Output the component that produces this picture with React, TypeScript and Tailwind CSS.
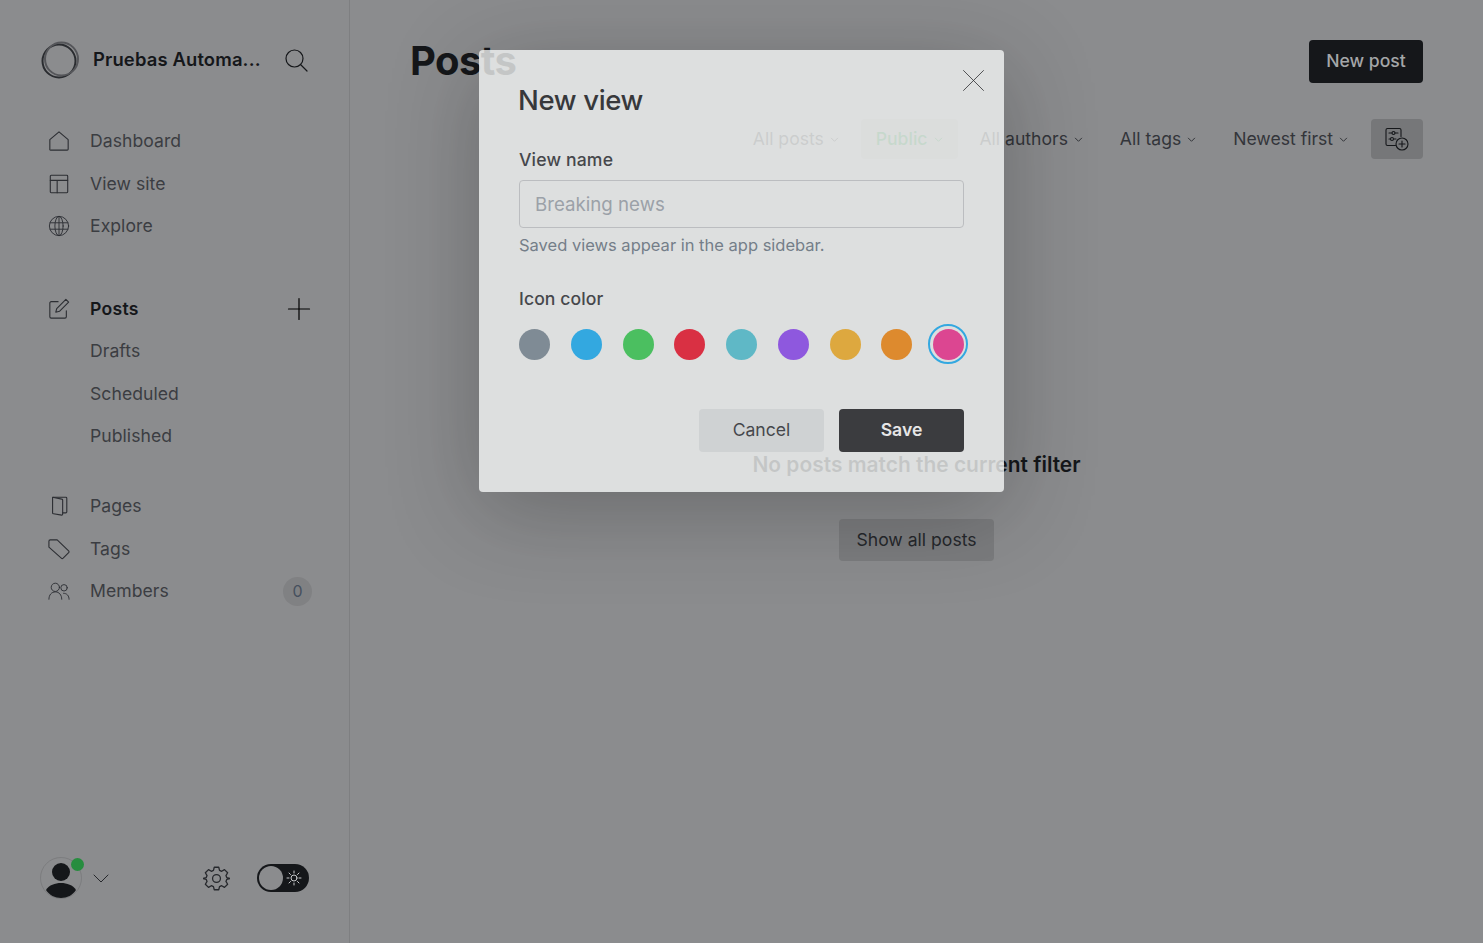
const line = { fill: "none", stroke: "currentColor", strokeWidth: 1.3, strokeLinecap: "round", strokeLinejoin: "round" } as const;

function Icon({ children, size = 22, thin }: { children: React.ReactNode; size?: number; thin?: boolean }) {
  return (
    <svg width={size} height={size} viewBox="0 0 24 24" {...line} strokeWidth={thin ? 1 : 1.2}>
      {children}
    </svg>
  );
}

function Chevron() {
  return (
    <svg width="9" height="9" viewBox="0 0 10 10" {...line} strokeWidth={1.1} className="ml-[6px] mt-[1px]">
      <path d="M1.5 3.5 5 7l3.5-3.5" />
    </svg>
  );
}

function NavItem({ icon, label, right, bold }: { icon?: React.ReactNode; label: string; right?: React.ReactNode; bold?: boolean }) {
  return (
    <div className="flex h-[42.5px] items-center pl-[48px] pr-[37px]">
      <div className="flex w-[22px] justify-center text-[#2c2e33]">{icon}</div>
      <span className={`ml-[20px] text-[17.6px] ${bold ? "font-semibold tracking-[0.3px] text-[#15171a]" : "tracking-[0.05px] text-[#3b3d42]"}`}>{label}</span>
      {right && <div className="ml-auto flex items-center">{right}</div>}
    </div>
  );
}

function Filter({ label, active }: { label: string; active?: boolean }) {
  return (
    <div className={`flex h-[40px] items-center rounded-[4px] px-[15px] text-[17.6px] ${active ? "bg-[#7f8082] font-medium text-[#1d6a34]" : "text-[#33353a]"}`}>
      {label}
      <Chevron />
    </div>
  );
}

const colors = ["bg-[#7c8b97]", "bg-[#1cb0f7]", "bg-[#3acd54]", "bg-[#ee1830]", "bg-[#54c5d6]", "bg-[#904bf4]", "bg-[#f4b02b]", "bg-[#f48a15]"];

function Sidebar() {
  return (
    <aside className="flex h-full w-[350px] shrink-0 flex-col border-r border-[#7e7f81] pt-[41px] pb-[44px]">
      <div className="flex h-[38px] items-center pl-[41px] pr-[41px]">
        <svg width="38" height="38" viewBox="0 0 38 38" fill="none">
          <circle cx="18" cy="20" r="16.5" stroke="#2a2c30" strokeWidth="2" />
          <circle cx="20.5" cy="18" r="16.5" stroke="#55565a" strokeWidth="2" />
        </svg>
        <span className="ml-[14px] text-[18.4px] font-semibold tracking-[0.15px] text-[#15171a]">Pruebas Automa...</span>
        <div className="ml-auto text-[#15171a]">
          <Icon size={24}><circle cx="10.5" cy="10.5" r="8.5" /><path d="M17 17l6 6" /></Icon>
        </div>
      </div>

      <nav className="mt-[41px]">
        <NavItem label="Dashboard" icon={<Icon><path d="M2 21.5V10.5L12 2l10 8.500V21a1 1 0 0 1-1 1H3a1 1 0 0 1-1-.5Z" /></Icon>} />
        <NavItem label="View site" icon={<Icon><rect x="2.500" y="2.500" width="19" height="19" rx="1" /><path d="M2.500 8h19M10 8v13.500" /></Icon>} />
        <NavItem label="Explore" icon={<Icon thin><circle cx="12" cy="12" r="10.500" /><ellipse cx="12" cy="12" rx="4.500" ry="10.500" /><path d="M2.500 8.500h19M2.500 15.500h19M12 1.500v21" /></Icon>} />
      </nav>

      <nav className="mt-[40px]">
        <NavItem
          bold
          label="Posts"
          icon={<Icon><path d="M11 4H3.500A1.500 1.500 0 0 0 2 5.500v15A1.500 1.500 0 0 0 3.500 22h15a1.500 1.500 0 0 0 1.500-1.500V14" /><path d="M19.500 1.500 22.500 4.500 12.500 14.500 8.500 15.500 9.500 11.500Z" /></Icon>}
          right={<div className="mr-[1px]"><Icon size={24}><path d="M12 1.500v21M1.500 12h21" /></Icon></div>}
        />
        <NavItem label="Drafts" />
        <NavItem label="Scheduled" />
        <NavItem label="Published" />
      </nav>

      <nav className="mt-[27.500px]">
        <NavItem label="Pages" icon={<Icon><path d="M5.500 2.500h14a1 1 0 0 1 1 1v15a1 1 0 0 1-1 1h-3.500" /><path d="M5 2.500l10 2a1 1 0 0 1 1 1V21a1 1 0 0 1-1 1l-9-1.500a1 1 0 0 1-1-1Z" /></Icon>} />
        <NavItem label="Tags" icon={<Icon><path d="M1 3.500A1.500 1.500 0 0 1 2.500 2H10l12.500 12a1.500 1.500 0 0 1 0 2l-6 6a1.500 1.500 0 0 1-2 0L1 10Z" /></Icon>} />
        <NavItem
          label="Members"
          icon={<Icon thin><circle cx="8" cy="8" r="4.500" /><path d="M1 21c0-5 3-8 7-8s7 3 7 8" /><circle cx="17.500" cy="8.500" r="3.500" /><path d="M17 14.500c3.500 0 6 2.500 6 6.500" /></Icon>}
          right={<div className="flex size-[29px] items-center justify-center rounded-full bg-[#808183] text-[16px] text-[#46505e]">0</div>}
        />
      </nav>

      <div className="mt-auto flex h-[42px] items-center pl-[40px]">
        <div className="relative size-[42px]">
          <svg width="42" height="42" viewBox="0 0 42 42" fill="none">
            <circle cx="21" cy="21" r="20.500" stroke="#7c7d7f" />
            <circle cx="21" cy="15" r="9" fill="#15171a" />
            <path d="M6 33c3-5 9-7 15-7s12 2 15 7c-3 5-9 8-15 8S9 38 6 33Z" fill="#15171a" />
          </svg>
          <div className="absolute top-[1px] right-[-2px] size-[13px] rounded-full bg-[#278d3f]" />
        </div>
        <div className="ml-[11px] text-[#26282c]">
          <svg width="16" height="16" viewBox="0 0 16 16" {...line} strokeWidth={1}><path d="M1 5l7 7 7-7" /></svg>
        </div>
        <div className="ml-[94px] text-[#26282c]">
          <svg width="27" height="27" viewBox="0 0 24 24" {...line} strokeWidth={1.15}>
            <circle cx="12" cy="12" r="3.500" />
            <path d="M10 2h4l.7 2.800 1.900.8 2.500-1.500 2.800 2.800-1.500 2.500.8 1.900 2.800.7v0l-.1 0-2.700.7-.8 1.900 1.500 2.500-2.800 2.800-2.500-1.500-1.900.8L14 22h-4l-.7-2.800-1.900-.8-2.500 1.500-2.800-2.800 1.500-2.500-.8-1.900L0 12l2.800-.7.8-1.900-1.500-2.500 2.800-2.800 2.500 1.500 1.900-.8Z" />
          </svg>
        </div>
        <div className="ml-[27px] flex h-[28px] w-[52px] items-center rounded-full bg-[#15171a] pl-[2px]">
          <div className="size-[24px] rounded-full bg-[#8b8c8e]" />
          <svg width="16" height="16" viewBox="0 0 16 16" {...line} strokeWidth={1} className="ml-[3px] text-[#c8c9cb]">
            <circle cx="8" cy="8" r="3" />
            <path d="M8 1v2M8 13v2M1 8h2M13 8h2M3 3l1.500 1.500M11.500 11.500 13 13M3 13l1.500-1.500M11.500 4.500 13 3" />
          </svg>
        </div>
      </div>
    </aside>
  );
}

function Main() {
  return (
    <main className="h-full flex-1 px-[60px] pt-[40px]">
      <div className="flex items-start justify-between">
        <h1 className="text-[40px] leading-[42px] font-bold tracking-[-0.6px] text-[#15171a]">Posts</h1>
        <button className="h-[43px] w-[114px] rounded-[4px] bg-[#15171a] text-[17.6px] font-medium text-[#a4a6a8]">New post</button>
      </div>

      <div className="mt-[36px] flex items-center justify-end gap-[6.900px]">
        <Filter label="All posts" />
        <Filter label="Public" active />
        <Filter label="All authors" />
        <Filter label="All tags" />
        <Filter label="Newest first" />
        <div className="ml-[1px] flex h-[40px] w-[52px] items-center justify-center rounded-[4px] bg-[#767779] text-[#15171a]">
          <svg width="26" height="26" viewBox="0 0 26 26" {...line} strokeWidth={1.1}>
            <path d="M11.500 19.500H3.500a1.500 1.500 0 0 1-1.500-1.500V4a1.500 1.500 0 0 1 1.500-1.500h12A1.500 1.500 0 0 1 17 4v6.500" />
            <path d="M5 7h3M11 7h3M5 13h1.500M10 13h2" />
            <circle cx="9.500" cy="7" r="1.500" />
            <circle cx="8" cy="13" r="1.500" />
            <circle cx="18" cy="18" r="6" />
            <path d="M18 15v6M15 18h6" />
          </svg>
        </div>
      </div>

      <div className="mt-[291px] flex flex-col items-center">
        <div className="text-[20.950px] leading-[30px] font-semibold text-[#15171a]">No posts match the current filter</div>
        <button className="mt-[39px] h-[42px] w-[155px] rounded-[4px] bg-[#7b7c7e] text-[17.6px] text-[#26282c]">Show all posts</button>
      </div>
    </main>
  );
}

function Modal() {
  return (
    <div className="absolute top-[50px] left-[479px] h-[442px] w-[525px] rounded-[4px] bg-[#f4f6f5] px-[40px] pt-[32px] opacity-[0.79] shadow-[0_18px_90px_rgba(0,0,0,0.3)]">
      <button className="absolute top-[20px] right-[20px] text-[#15171a]">
        <svg width="21" height="21" viewBox="0 0 21 21" {...line} strokeWidth={0.8}><path d="M.5.5l20 20M20.500.5l-20 20" /></svg>
      </button>
      <h2 className="ml-[-1px] text-[27.500px] leading-[36px] font-medium tracking-[-0.35px] text-[#212225]">New view</h2>
      <label className="mt-[29px] block text-[17.6px] leading-[26px] font-medium tracking-[0.15px] text-[#33353a]">View name</label>
      <div className="mt-[7px] flex h-[48px] items-center rounded-[4px] border border-[#c9cbce] px-[15px] pt-[2px] text-[18.700px] text-[#a0a7b0]">Breaking news</div>
      <p className="mt-[5px] text-[16.500px] leading-[24px] text-[#6f7b88]">Saved views appear in the app sidebar.</p>
      <label className="mt-[29px] block text-[17.6px] leading-[26px] font-medium tracking-[0.1px] text-[#33353a]">Icon color</label>
      <div className="mt-[12px] flex h-[40px] items-center">
        <div className="flex shrink-0 items-center gap-[20.750px]">
          {colors.map((c) => (
            <div key={c} className={`size-[31px] shrink-0 rounded-full ${c}`} />
          ))}
        </div>
        <div className="ml-[16px] flex size-[40px] shrink-0 items-center justify-center rounded-full border-2 border-[#1cb0f7]">
          <div className="size-[31px] shrink-0 rounded-full bg-[#f23492]" />
        </div>
      </div>
      <div className="mt-[45px] flex justify-end gap-[15px]">
        <button className="h-[43px] w-[125px] rounded-[4px] bg-[#e2e5e6] text-[17.6px] text-[#33353a]">Cancel</button>
        <button className="h-[43px] w-[125px] rounded-[4px] bg-[#26272a] text-[17.6px] font-semibold text-white">Save</button>
      </div>
    </div>
  );
}

export default function App() {
  return (
    <div className="relative flex h-screen overflow-hidden bg-[#8b8c8e] font-['Inter',sans-serif]">
      <Sidebar />
      <Main />
      <Modal />
    </div>
  );
}
